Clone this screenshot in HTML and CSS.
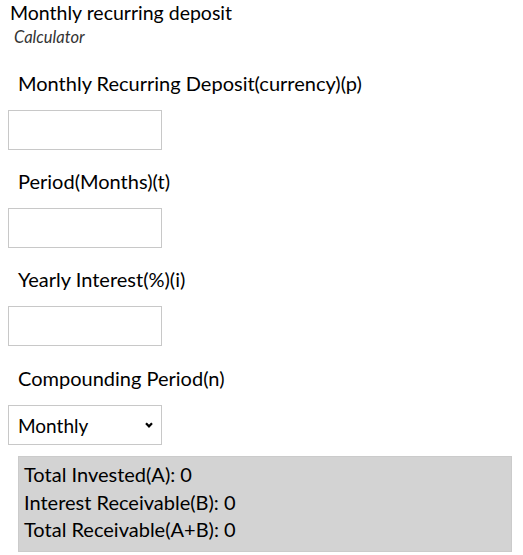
FILE: index.html
```html
<!DOCTYPE html>
<html lang="en">
<head>
<meta charset="utf-8">
<title>Monthly recurring deposit</title>
<link rel="stylesheet" href="styles.css">
</head>
<body>
<div class="page">
  <h1 class="title">Monthly recurring deposit</h1>
  <div class="subtitle">Calculator</div>

  <div class="field">
    <label class="label" for="p">Monthly Recurring Deposit(currency)(p)</label>
    <input class="box" id="p" type="text">
  </div>
  <div class="field">
    <label class="label" for="t">Period(Months)(t)</label>
    <input class="box" id="t" type="text">
  </div>
  <div class="field">
    <label class="label" for="i">Yearly Interest(%)(i)</label>
    <input class="box" id="i" type="text">
  </div>
  <div class="field">
    <label class="label label-last" for="n">Compounding Period(n)</label>
    <div class="select-wrap">
      <select class="box select" id="n">
        <option>Monthly</option>
        <option>Quarterly</option>
        <option>Yearly</option>
      </select>
      <svg class="chev" width="8" height="6" viewBox="0 0 8 6"><path d="M1 1.2 L4 4.3 L7 1.2" fill="none" stroke="#000" stroke-width="2.2"/></svg>
    </div>
  </div>

  <div class="result">
    <div class="line">Total Invested(A): 0</div>
    <div class="line">Interest Receivable(B): 0</div>
    <div class="line">Total Receivable(A+B): 0</div>
  </div>
</div>
</body>
</html>
```

FILE: styles.css
```css
html, body {
  margin: 0;
  padding: 0;
  background: #fff;
}
body {
  font-family: Lato, "Open Sans", sans-serif;
  color: #000;
}
.page {
  padding: 0 8px 0 8px;
}
.title {
  margin: 0 0 0 2px;
  font-size: 19.5px;
  font-weight: 400;
  line-height: 26px;
}
.subtitle {
  margin: 1px 0 0 6px;
  font-size: 16.5px;
  font-style: italic;
  color: #333;
  line-height: 20px;
}
.field {
  display: flex;
  flex-direction: column;
  align-items: flex-start;
}
.label {
  margin: 22px 0 13px 10px;
  font-size: 20px;
  line-height: 28px;
  height: 28px;
}
.field + .field .label {
  margin-top: 17px;
}
.field + .field .label-last {
  margin-top: 18px;
}
.box {
  box-sizing: border-box;
  width: 154px;
  height: 40px;
  border: 1px solid #c8c8c8;
  background: #fff;
  margin: 0;
  padding: 0 9px;
  font-family: inherit;
  font-size: 20px;
  color: #000;
  border-radius: 0;
  outline: none;
}
.select-wrap {
  position: relative;
  width: 154px;
  height: 40px;
}
.select {
  appearance: none;
  -webkit-appearance: none;
  display: block;
  font-size: 19px;
}
.chev {
  position: absolute;
  right: 9px;
  top: 17px;
  pointer-events: none;
}
.result {
  margin: 11px 0 0 10px;
  width: 494px;
  box-sizing: border-box;
  background: #d3d3d3;
  border: 1px solid #cbcbcb;
  padding: 4px 6px 7px 5px;
}
.line {
  font-size: 20px;
  line-height: 27.5px;
}
```
